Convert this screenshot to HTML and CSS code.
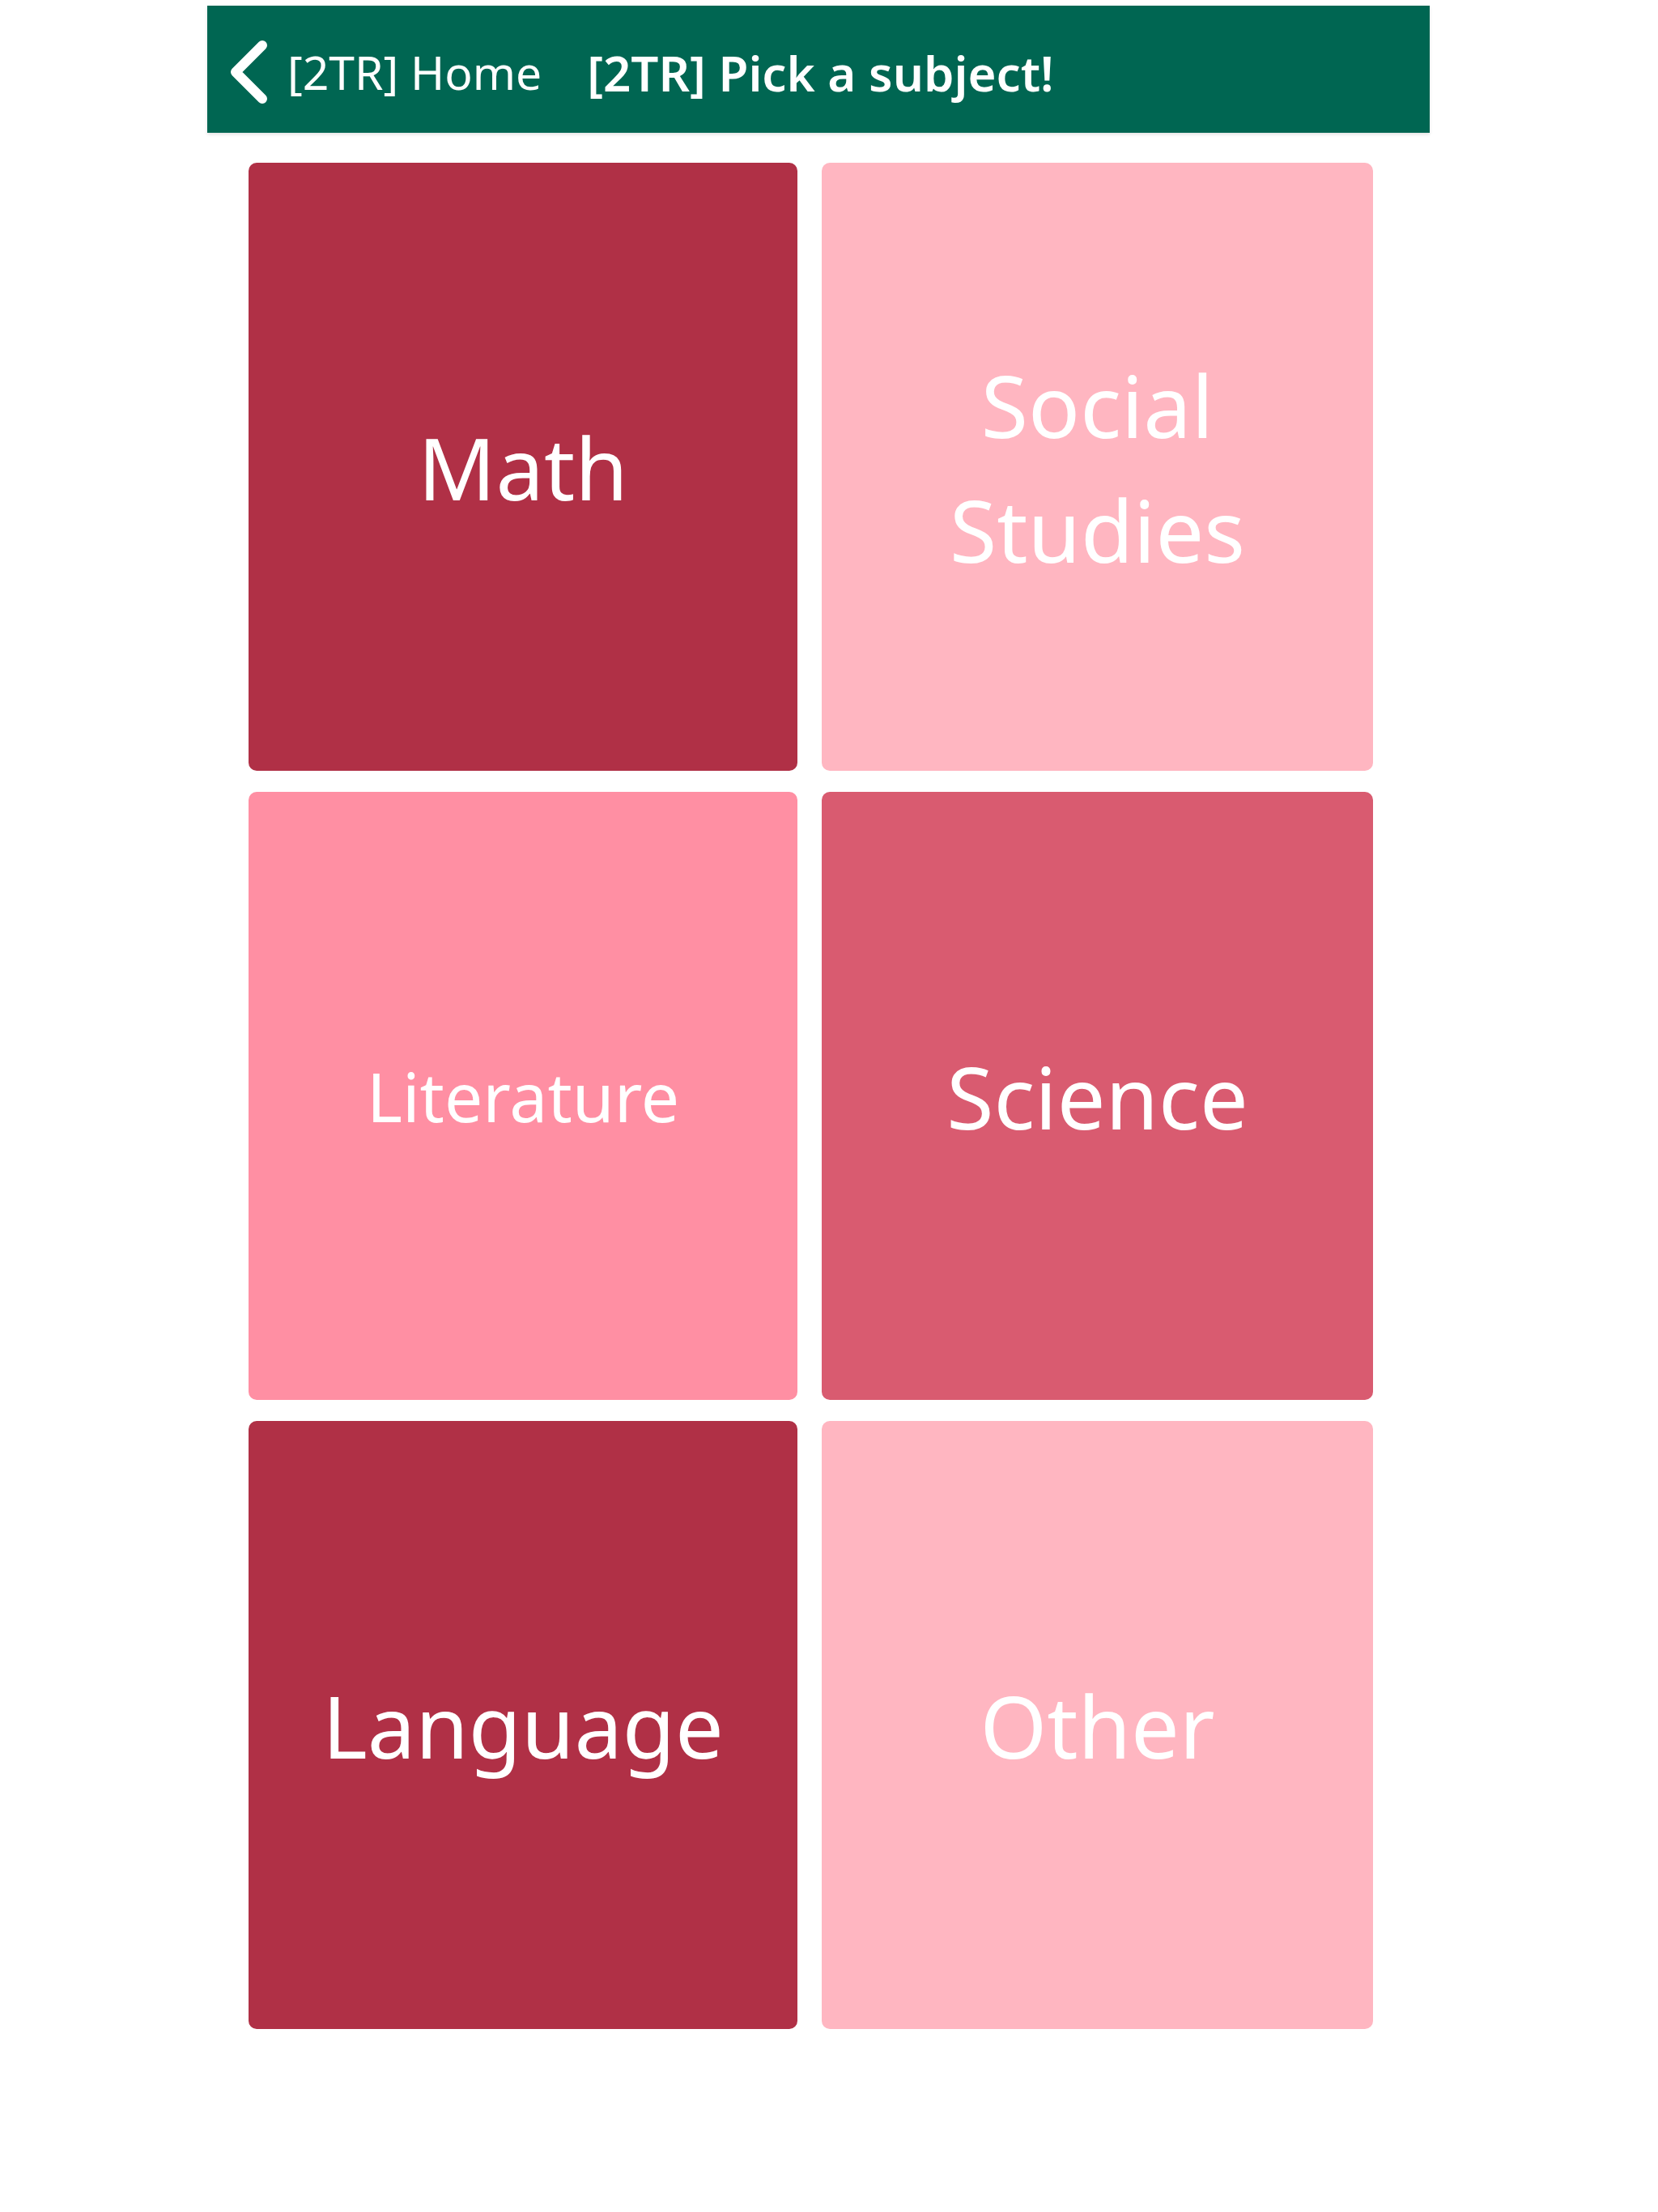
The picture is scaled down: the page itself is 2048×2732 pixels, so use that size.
FILE: index.html
```html
<!DOCTYPE html>
<html lang="en">
<head>
<meta charset="utf-8">
<title>[2TR] Pick a subject!</title>
<link rel="stylesheet" href="styles.css">
</head>
<body>
<div class="app">
  <header class="topbar">
    <a class="back" href="#">
      <svg class="chevron" width="50" height="78" viewBox="0 0 50 78" aria-hidden="true">
        <polyline points="41,6 8,39 41,72" fill="none" stroke="#ffffff" stroke-width="12" stroke-linecap="round" stroke-linejoin="round"/>
      </svg>
      <span class="back-label">[2TR] Home</span>
    </a>
    <h1 class="title">[2TR] Pick a subject!</h1>
  </header>
  <main class="grid">
    <a class="tile tile-dark" href="#">Math</a>
    <a class="tile tile-light" href="#">Social Studies</a>
    <a class="tile tile-medium tile-small" href="#">Literature</a>
    <a class="tile tile-rose" href="#">Science</a>
    <a class="tile tile-dark" href="#">Language</a>
    <a class="tile tile-light" href="#">Other</a>
  </main>
</div>
</body>
</html>
```

FILE: styles.css
```css
html, body {
  margin: 0;
  padding: 0;
  background: #ffffff;
}

body {
  font-family: "Noto Sans", "Open Sans", "Liberation Sans", sans-serif;
  color: #ffffff;
}

.app {
  width: 1510px;
  margin: 7px 0 0 256px;
}

.topbar {
  height: 157px;
  background: #006652;
  display: flex;
  align-items: center;
  padding-left: 27px;
  box-shadow: 0 2px 4px rgba(0, 0, 0, 0.12);
  box-sizing: border-box;
}

.back {
  display: flex;
  align-items: center;
  gap: 22px;
  color: #ffffff;
  text-decoration: none;
}

.chevron {
  display: block;
  margin-top: 6px;
}

.back-label {
  font-size: 57px;
  font-weight: 400;
  line-height: 1;
  padding-top: 8px;
}

.title {
  margin: 0 0 0 56px;
  font-size: 60px;
  font-weight: 600;
  line-height: 1;
  padding-top: 8px;
}

.grid {
  display: grid;
  grid-template-columns: 678px 681px;
  grid-auto-rows: 751px;
  column-gap: 30px;
  row-gap: 26px;
  padding: 37px 0 0 51px;
}

.tile {
  display: flex;
  align-items: center;
  justify-content: center;
  text-align: center;
  border-radius: 10px;
  color: #ffffff;
  text-decoration: none;
  font-size: 106px;
  line-height: 154px;
  padding: 0 60px;
}

.tile-small {
  font-size: 84px;
}

.tile-dark {
  background: #b03046;
}

.tile-light {
  background: #ffb6c1;
}

.tile-medium {
  background: #ff8fa3;
}

.tile-rose {
  background: #d95b70;
}
```
